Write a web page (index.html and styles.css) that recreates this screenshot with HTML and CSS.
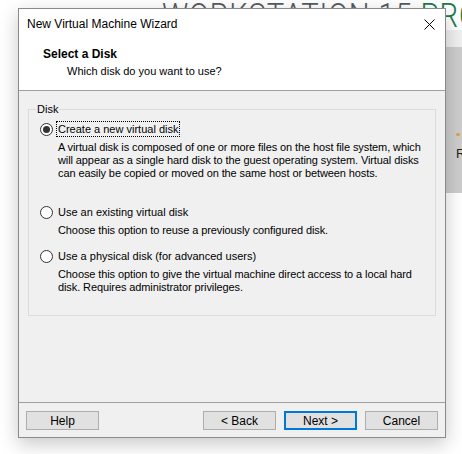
FILE: index.html
```html
<!DOCTYPE html>
<html lang="en">
<head>
    <meta charset="UTF-8">
    <meta name="viewport" content="width=device-width, initial-scale=1.0">
    <title>New Virtual Machine Wizard</title>
    <link rel="stylesheet" href="styles.css">
</head>
<body>
    <div id="desktop">
        <div id="brand">WORKSTATION 15 <span class="brand-pro">PRO</span></div>
        <div id="side-panel">
            <span class="side-dot"></span>
            <span class="side-letter">R</span>
        </div>

        <div id="wizard">
            <div class="title-bar">
                <span class="title-text">New Virtual Machine Wizard</span>
                <svg class="close-icon" width="11" height="11" viewBox="0 0 11 11">
                    <path d="M0.5 0.5 L10.5 10.5 M10.5 0.5 L0.5 10.5" stroke="#000" stroke-width="1" fill="none"/>
                </svg>
            </div>

            <div class="wizard-header">
                <h2>Select a Disk</h2>
                <p>Which disk do you want to use?</p>
            </div>

            <div class="wizard-body">
                <fieldset class="group-box">
                    <legend>Disk</legend>

                    <div class="option option-first">
                        <label class="radio-row">
                            <span class="radio checked"></span>
                            <span class="radio-label focused">Create a new virtual disk</span>
                        </label>
                        <p class="option-desc">A virtual disk is composed of one or more files on the host file system, which<br>will appear as a single hard disk to the guest operating system. Virtual disks<br>can easily be copied or moved on the same host or between hosts.</p>
                    </div>

                    <div class="option option-second">
                        <label class="radio-row">
                            <span class="radio"></span>
                            <span class="radio-label">Use an existing virtual disk</span>
                        </label>
                        <p class="option-desc">Choose this option to reuse a previously configured disk.</p>
                    </div>

                    <div class="option option-third">
                        <label class="radio-row">
                            <span class="radio"></span>
                            <span class="radio-label">Use a physical disk (for advanced users)</span>
                        </label>
                        <p class="option-desc">Choose this option to give the virtual machine direct access to a local hard<br>disk. Requires administrator privileges.</p>
                    </div>
                </fieldset>
            </div>

            <div class="wizard-footer">
                <button type="button" class="btn">Help</button>
                <div class="footer-spacer"></div>
                <button type="button" class="btn">&lt; Back</button>
                <button type="button" class="btn btn-default">Next &gt;</button>
                <button type="button" class="btn">Cancel</button>
            </div>
        </div>
    </div>
</body>
</html>
```

FILE: styles.css
```css
body {
    margin: 0;
    padding: 0;
    background-color: #ffffff;
    font-family: 'Liberation Sans', Arial, sans-serif;
    font-size: 11px;
    color: #000000;
}

#desktop {
    position: relative;
    width: 462px;
    height: 454px;
    overflow: hidden;
    background-color: #ffffff;
}

/* product name painted behind the dialog */
#brand {
    position: absolute;
    left: 162px;
    top: -2px;
    font-family: Roboto, sans-serif;
    font-weight: 300;
    font-size: 34px;
    line-height: 34px;
    letter-spacing: 1px;
    color: #555a5e;
    white-space: nowrap;
    transform: scaleX(0.86);
    transform-origin: left top;
}

.brand-pro {
    color: #1b7a4a;
}

#side-panel {
    position: absolute;
    left: 446px;
    top: 30px;
    width: 16px;
    height: 163px;
    box-sizing: border-box;
    border-top: 17px solid #f0f0f0;
    background-color: #cdcdcd;
}

.side-dot {
    position: absolute;
    left: 10px;
    top: 86px;
    width: 4px;
    height: 3px;
    border-radius: 2px;
    background-color: #d9a64a;
}

.side-letter {
    position: absolute;
    left: 10px;
    top: 99px;
    font-size: 13px;
    color: #222;
}

#wizard {
    position: absolute;
    left: 18px;
    top: 8px;
    width: 428px;
    height: 430px;
    box-sizing: border-box;
    border: 1px solid #8a8a8a;
    background-color: #f0f0f0;
    box-shadow: 0 6px 18px rgba(0, 0, 0, 0.22);
    display: flex;
    flex-direction: column;
}

.title-bar {
    height: 29px;
    flex-shrink: 0;
    background-color: #ffffff;
    display: flex;
    align-items: center;
    justify-content: space-between;
    padding: 0 10px 0 8px;
    font-size: 12px;
}

.title-text {
    margin-top: 1px;
}

.close-icon {
    margin-top: 1px;
}

.wizard-header {
    height: 53px;
    flex-shrink: 0;
    background-color: #ffffff;
    border-bottom: 1px solid #a0a0a0;
    padding-left: 24px;
    box-sizing: border-box;
}

.wizard-header h2 {
    margin: 8px 0 0 0;
    font-size: 12px;
    font-weight: bold;
    line-height: 16px;
}

.wizard-header p {
    margin: 1px 0 0 24px;
    line-height: 16px;
}

.wizard-body {
    flex: 1;
    padding: 11px 9px 0 9px;
}

.group-box {
    margin: 0;
    height: 214px;
    box-sizing: border-box;
    border: 1px solid #dcdcdc;
    padding: 5px 0 0 11px;
}

.group-box legend {
    padding: 0 1px;
    margin-left: -4px;
    line-height: 14px;
}

.radio-row {
    display: flex;
    align-items: center;
    height: 16px;
}

.radio {
    width: 11px;
    height: 11px;
    border: 1px solid #333333;
    border-radius: 50%;
    background-color: #ffffff;
    position: relative;
    margin-right: 3px;
}

.radio.checked::after {
    content: '';
    position: absolute;
    left: 2px;
    top: 2px;
    width: 7px;
    height: 7px;
    border-radius: 50%;
    background-color: #333333;
}

.radio-label {
    padding: 0 1px;
    line-height: 14px;
    border: 1px dotted transparent;
}

.radio-label.focused {
    border-color: #000000;
}

.option-desc {
    margin: 4px 0 0 18px;
    line-height: 13px;
    letter-spacing: -0.1px;
    white-space: nowrap;
}

.option-second {
    margin-top: 24px;
}

.option-third {
    margin-top: 11px;
}

.wizard-footer {
    height: 35px;
    flex-shrink: 0;
    box-sizing: border-box;
    border-top: 1px solid #a0a0a0;
    display: flex;
    align-items: flex-start;
    gap: 8px;
    padding: 8px 7px 0 7px;
}

.footer-spacer {
    flex: 1;
}

.btn {
    width: 73px;
    height: 19px;
    box-sizing: border-box;
    margin: 0;
    padding: 0;
    border: 1px solid #adadad;
    background-color: #e1e1e1;
    font-family: inherit;
    font-size: 12px;
    color: #000000;
}

.btn-default {
    border: 2px solid #0078d7;
}
```
